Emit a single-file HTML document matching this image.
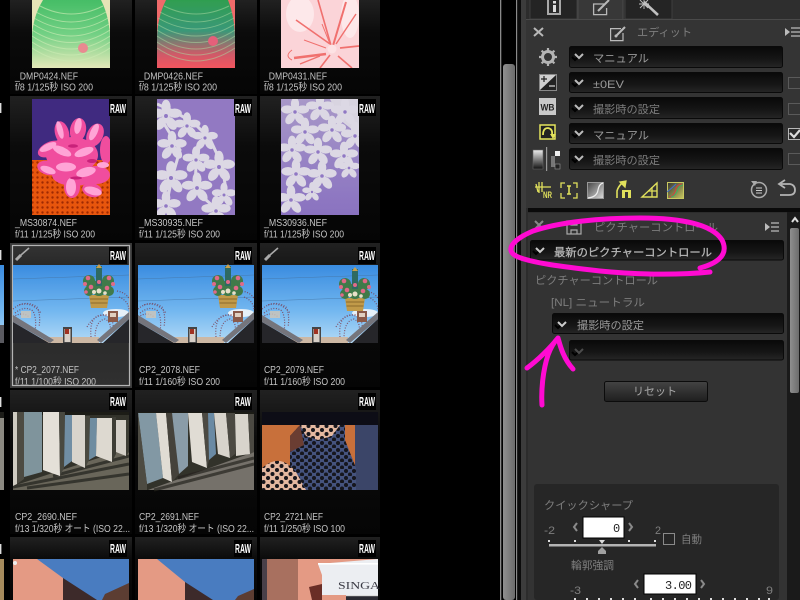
<!DOCTYPE html>
<html><head><meta charset="utf-8"><style>
html,body{margin:0;padding:0;background:#000;width:800px;height:600px;overflow:hidden}
svg{display:block}
text{font-family:"Liberation Sans","Noto Sans CJK JP",sans-serif}
.f{font-size:10px;fill:#c4c4c4}
.l{font-size:11px;fill:#9a9a9a}
.d{font-size:11px;fill:#7e7e7e}
.r{font-size:13px;font-weight:bold;fill:#fff}
.m{font-family:"Liberation Mono",monospace;font-size:12px;fill:#222}
</style></head><body>
<svg width="800" height="600" viewBox="0 0 800 600" xmlns="http://www.w3.org/2000/svg">
<defs>
<linearGradient id="cell" x1="0" y1="0" x2="0" y2="1"><stop offset="0" stop-color="#212121"/><stop offset=".35" stop-color="#0b0b0b"/><stop offset="1" stop-color="#050505"/></linearGradient>
<linearGradient id="sel" x1="0" y1="0" x2="0" y2="1"><stop offset="0" stop-color="#333"/><stop offset=".2" stop-color="#242424"/><stop offset="1" stop-color="#303030"/></linearGradient>
<linearGradient id="sky" x1="0" y1="0" x2="0" y2="1"><stop offset="0" stop-color="#3a8ce0"/><stop offset=".6" stop-color="#74b8f0"/><stop offset="1" stop-color="#b4daf6"/></linearGradient>
<linearGradient id="dd" x1="0" y1="0" x2="0" y2="1"><stop offset="0" stop-color="#090909"/><stop offset=".6" stop-color="#161616"/><stop offset="1" stop-color="#262626"/></linearGradient>
<linearGradient id="btn" x1="0" y1="0" x2="0" y2="1"><stop offset="0" stop-color="#444"/><stop offset="1" stop-color="#1e1e1e"/></linearGradient>
<linearGradient id="sb" x1="0" y1="0" x2="1" y2="0"><stop offset="0" stop-color="#8f8f8f"/><stop offset="1" stop-color="#6c6c6c"/></linearGradient>
<linearGradient id="g1" x1="0" y1="0" x2="0" y2="1"><stop offset="0" stop-color="#46bd66"/><stop offset=".5" stop-color="#72d084"/><stop offset="1" stop-color="#e4e8b8"/></linearGradient>
<linearGradient id="g2" x1="0" y1="0" x2="0" y2="1"><stop offset="0" stop-color="#2f9e50"/><stop offset=".45" stop-color="#3a9878"/><stop offset=".8" stop-color="#d05a68"/><stop offset="1" stop-color="#f2555f"/></linearGradient>
<linearGradient id="grey" x1="0" y1="0" x2="0" y2="1"><stop offset="0" stop-color="#eee"/><stop offset="1" stop-color="#111"/></linearGradient>
<linearGradient id="curve" x1="0" y1="0" x2="1" y2="1"><stop offset="0" stop-color="#333"/><stop offset="1" stop-color="#c8c860"/></linearGradient>
<linearGradient id="tone" x1="0" y1="0" x2="1" y2="1"><stop offset="0" stop-color="#444"/><stop offset="1" stop-color="#ddd"/></linearGradient>
<linearGradient id="pap" x1="0" y1="0" x2="0" y2="1"><stop offset="0" stop-color="#a898c8"/><stop offset=".55" stop-color="#9682c4"/><stop offset="1" stop-color="#8a72c0"/></linearGradient>
<pattern id="dots" width="5" height="5" patternUnits="userSpaceOnUse"><rect width="5" height="5" fill="#e8560e"/><circle cx="2.5" cy="2.5" r="1.2" fill="#a02c06"/></pattern>
<pattern id="leoL" width="9" height="8" patternUnits="userSpaceOnUse"><rect width="9" height="8" fill="#e4b8a0"/><circle cx="2.5" cy="2" r="2" fill="#17131a"/><circle cx="7" cy="6" r="2" fill="#17131a"/></pattern>
<pattern id="leoB" width="8" height="7" patternUnits="userSpaceOnUse"><rect width="8" height="7" fill="#44527e"/><circle cx="2" cy="2" r="2" fill="#12121e"/><circle cx="6" cy="5.5" r="2" fill="#12121e"/></pattern>
<filter id="soft"><feGaussianBlur stdDeviation=".35"/></filter>
<clipPath id="c1"><rect x="32" y="0" width="78" height="68"/></clipPath>
<clipPath id="c2"><rect x="157" y="0" width="78" height="68"/></clipPath>
<clipPath id="c3"><rect x="281" y="0" width="78" height="68"/></clipPath>
<clipPath id="c4"><rect x="32" y="99" width="78" height="116"/></clipPath>
<clipPath id="c5"><rect x="157" y="99" width="78" height="116"/></clipPath>
<clipPath id="c6"><rect x="281" y="99" width="78" height="116"/></clipPath>

<g id="fl"><g fill="#dcd8e4"><ellipse cx="0" cy="-7" rx="3.6" ry="5.5"/><ellipse cx="6.7" cy="-2.2" rx="5.5" ry="3.6"/><ellipse cx="4.1" cy="5.7" rx="3.6" ry="5.5" transform="rotate(-36 4.1 5.7)"/><ellipse cx="-4.1" cy="5.7" rx="3.6" ry="5.5" transform="rotate(36 -4.1 5.7)"/><ellipse cx="-6.7" cy="-2.2" rx="5.5" ry="3.6"/><circle r="3"/></g><circle r="1.5" fill="#9078c4"/></g>

<g id="scene"><rect width="116" height="78" fill="url(#sky)"/>
<path d="M0 14 L116 10 M0 36 L116 32" stroke="#4472a0" stroke-width=".4"/>
<ellipse cx="103" cy="48" rx="13" ry="4" fill="#e6f0f8"/>
<g fill="none" stroke="#7a3040" stroke-width="1.2" stroke-dasharray="1 1.6" opacity=".75">
<path d="M0 44 Q12 34 24 42 Q28 50 26 62"/><path d="M2 48 Q12 40 20 46 Q24 54 22 66"/><path d="M6 40 Q18 36 28 48"/><path d="M0 52 Q10 46 16 52"/>
<path d="M78 72 Q76 50 90 50 Q102 52 100 66"/><path d="M82 74 Q82 56 92 54 Q100 58 96 70"/><path d="M74 62 Q82 48 96 50"/>
<path d="M106 32 Q116 36 116 46"/><path d="M104 26 Q114 28 116 34"/>
</g>
<rect x="30" y="72" width="56" height="6" fill="#cdb8a4"/>
<path d="M0 57 L36 78 L0 78Z" fill="#26262c"/><path d="M0 50 L41 75 L37 78 L0 57Z" fill="#74747c"/>
<path d="M116 54 L90 78 L116 78Z" fill="#26262c"/><path d="M116 47 L84 75 L88 78 L116 54Z" fill="#74747c"/>
<rect x="8" y="46" width="10" height="7" fill="#cfc6b8" opacity=".8"/>
<rect x="50" y="62" width="9" height="16" fill="#444"/><rect x="51.5" y="64" width="6" height="13" fill="#d8d0c8"/><rect x="52" y="64" width="4" height="5" fill="#a03020"/>
<rect x="95" y="46" width="10" height="11" fill="#8a5a48"/><rect x="97" y="48" width="6" height="4" fill="#e0d0c0"/>
</g>
<g id="deco">
<path d="M76 30 L96 30 L94 43 L78 43Z" fill="#c19a48"/><path d="M77 34 L95 34 M77.5 38 L94.5 38" stroke="#7a5a22" stroke-width=".7"/>
<g fill="#3f7a4a"><circle cx="76" cy="16" r="6"/><circle cx="95" cy="16" r="6"/><circle cx="86" cy="23" r="8"/><circle cx="76" cy="26" r="5"/><circle cx="96" cy="26" r="5"/></g>
<rect x="83" y="1" width="6" height="20" fill="#2e6a62"/><path d="M83 3 L86 -1 L89 3" fill="#c8a050"/>
<g fill="#e06a88"><circle cx="75" cy="13" r="2.3"/><circle cx="96" cy="13" r="2.3"/><circle cx="78" cy="22" r="2.3"/><circle cx="94" cy="23" r="2.3"/><circle cx="86" cy="17" r="2"/><circle cx="72" cy="19" r="2"/><circle cx="100" cy="19" r="2"/><circle cx="73" cy="27" r="1.8"/></g>
<g fill="#e8e0c8"><circle cx="86" cy="26" r="2.5"/><circle cx="81" cy="27" r="2"/><circle cx="92" cy="28" r="1.8"/></g>
</g>

<g id="wall"><rect width="116" height="78" fill="#33312b"/>
<rect width="116" height="3" fill="#1c1c18"/>
<path d="M0 78 L0 74 L116 36 L116 78Z" fill="#69665a"/>
<path d="M0 75 L116 52 M14 76 L116 62 M40 64 L116 44" stroke="#26241f" stroke-width="3" opacity=".75"/>
<path d="M0 0 L4 0 L4 72 L0 74Z" fill="#d0ccc2"/>
<path d="M4 0 L11 0 L11 67 L4 72Z" fill="#4e4c42"/>
<path d="M11 0 L29 0 L29 60 L11 65Z" fill="#7f949c"/>
<path d="M30 0 L46 0 L47 64 L30 58Z" fill="#e4e0d8"/>
<path d="M46 0 L52 0 L51 56 L47 64Z" fill="#4a4840"/>
<path d="M52 3 L59 3 L59 49 L51 55Z" fill="#6f8ea4"/>
<path d="M59 3 L72 3 L72 56 L59 50Z" fill="#d8d4cc"/>
<path d="M72 4 L77 4 L76 48 L72 56Z" fill="#4a4840"/>
<path d="M77 6 L84 6 L83 44 L76 48Z" fill="#6e8ca0"/>
<path d="M84 6 L99 6 L99 50 L83 44Z" fill="#ddd9d0"/>
<path d="M99 5 L103 5 L103 42 L99 50Z" fill="#3e3c34"/>
<path d="M103 8 L113 8 L113 44 L103 40Z" fill="#d4d0c8"/>
<path d="M113 8 L116 8 L116 40 L113 44Z" fill="#3e3c34"/>
</g>
<g id="wall2"><rect width="116" height="78" fill="#33312b"/>
<rect width="116" height="3" fill="#1c1c18"/>
<path d="M10 78 L116 40 L116 78Z" fill="#75716a"/>
<path d="M16 78 L116 52 M40 66 L116 46" stroke="#26241f" stroke-width="3" opacity=".7"/>
<path d="M0 1 L18 1 L25 66 L9 72Z" fill="#8298a4"/>
<path d="M0 0 L0 78 L9 78 L9 72Z" fill="#4e4c42"/>
<path d="M18 1 L28 1 L34 70 L25 66Z" fill="#e0dcd4"/>
<path d="M28 1 L34 1 L41 62 L34 70Z" fill="#45433b"/>
<path d="M34 1 L50 1 L50 54 L41 62Z" fill="#8a9ca8"/>
<path d="M50 1 L64 1 L69 56 L54 50Z" fill="#e0dcd4"/>
<path d="M64 1 L70 1 L71 48 L69 56Z" fill="#4c4a42"/>
<path d="M70 1 L76 1 L78 42 L71 48Z" fill="#6a8aa4"/>
<path d="M76 1 L88 1 L92 46 L80 42Z" fill="#d8d4cc"/>
<path d="M88 1 L97 1 L97 42 L92 46Z" fill="#4c4a42"/>
<path d="M97 2 L110 2 L112 42 L98 44Z" fill="#d8d4cc"/>
<path d="M110 2 L116 2 L116 40 L112 42Z" fill="#4c4a42"/>
</g>
<g id="pink1"><rect width="116" height="41" fill="#4a7cc0"/><path d="M0 0 L24 0 L50 19 L50 41 L0 41Z" fill="#e49a84"/><path d="M50 19 L84 41 L50 41Z" fill="#3c2a2c"/><path d="M89 41 L92 35 L116 24 L116 41Z" fill="#5c3c32"/><circle cx="2" cy="4" r="2" fill="#eee"/></g>
<g id="pink2"><rect width="116" height="41" fill="#4a7cc0"/><path d="M0 0 L19 0 L47 23 L47 41 L0 41Z" fill="#e49a84"/><path d="M47 23 L75 41 L47 41Z" fill="#3c2a2c"/><path d="M97 41 L100 37 L116 30 L116 41Z" fill="#5c3c32"/></g>
</defs>

<rect width="800" height="600" fill="#000"/>

<!-- left sliver -->
<g>
<rect x="0" y="265" width="4" height="78" fill="url(#sky)"/><rect x="0" y="325" width="4" height="18" fill="#5a5a60"/>
<rect x="0" y="412" width="4" height="78" fill="#8a8880"/><rect x="0" y="412" width="4" height="6" fill="#1c1c18"/>
<rect x="0" y="559" width="4" height="41" fill="#a48a5c"/>
<rect x="0" y="103" width="1.4" height="10" fill="#ddd"/><rect x="0" y="250" width="1.4" height="10" fill="#ddd"/><rect x="0" y="397" width="1.4" height="10" fill="#ddd"/><rect x="0" y="544" width="1.4" height="10" fill="#ddd"/>
</g>

<!-- cells -->
<g fill="url(#cell)">
<rect x="10" y="0" width="122" height="94"/><rect x="135" y="0" width="122" height="94"/><rect x="260" y="0" width="120" height="94"/>
<rect x="10" y="96" width="122" height="144"/><rect x="135" y="96" width="122" height="144"/><rect x="260" y="96" width="120" height="144"/>
<rect x="135" y="243" width="122" height="144"/><rect x="260" y="243" width="120" height="144"/>
<rect x="10" y="390" width="122" height="144"/><rect x="135" y="390" width="122" height="144"/><rect x="260" y="390" width="120" height="144"/>
<rect x="10" y="537" width="122" height="63"/><rect x="135" y="537" width="122" height="63"/><rect x="260" y="537" width="120" height="63"/>
</g>
<rect x="10" y="243" width="122" height="145" fill="#3a3a3a"/>
<rect x="12.5" y="245.5" width="117" height="140" fill="url(#sel)" stroke="#b4b4b4" stroke-width="1.2"/>

<g filter="url(#soft)">
<!-- row 1 -->
<g clip-path="url(#c1)"><rect x="32" y="0" width="78" height="68" fill="#e6e4b6"/>
<path d="M43 0 Q32 18 32 40 V68 H110 V40 Q110 18 101 0Z" fill="url(#g1)"/>
<g fill="none" stroke="#ccecb4" stroke-width="1" opacity=".65"><path d="M40 6 Q71 22 103 6"/><path d="M36 12 Q71 32 106 12"/><path d="M34 18 Q71 40 108 18"/><path d="M33 24 Q71 48 109 24"/><path d="M32 30 Q71 55 110 30"/><path d="M32 36 Q71 62 110 36"/><path d="M32 42 Q71 68 110 42"/><path d="M32 48 Q71 74 110 48"/></g>
<circle cx="83" cy="48" r="5" fill="#e88a90"/></g>

<g clip-path="url(#c2)"><rect x="157" y="0" width="78" height="68" fill="#f06a6a"/>
<path d="M166 0 Q157 18 157 40 V68 H235 V40 Q235 18 228 0Z" fill="url(#g2)"/>
<g fill="none" stroke="#a8d8a0" stroke-width="1" opacity=".55"><path d="M164 6 Q196 22 229 6"/><path d="M160 12 Q196 32 232 12"/><path d="M158 18 Q196 40 234 18"/><path d="M157 24 Q196 48 235 24"/><path d="M157 30 Q196 55 235 30"/><path d="M157 36 Q196 62 235 36"/><path d="M157 42 Q196 68 235 42"/><path d="M157 48 Q196 74 235 48"/></g>
<circle cx="213" cy="41" r="5" fill="#e4607a"/></g>

<g clip-path="url(#c3)"><rect x="281" y="0" width="78" height="68" fill="#fbd4d8"/>
<g fill="#fde8ea"><ellipse cx="300" cy="14" rx="14" ry="18"/><ellipse cx="350" cy="16" rx="9" ry="22"/></g>
<g stroke="#f0706e" fill="none"><path d="M332 49 L318 0" stroke-width="1.6"/><path d="M332 49 L346 2" stroke-width="2"/><path d="M336 44 L356 14" stroke-width="1.4"/><path d="M330 44 L296 20" stroke-width="1.6"/><path d="M326 48 L304 40"/><path d="M340 48 L359 46" stroke-width="1.8"/><path d="M326 54 L294 58" stroke-width="2.4"/><path d="M292 50 Q284 56 292 60"/><path d="M330 55 L320 68" stroke-width="1.6"/><path d="M338 56 L352 68" stroke-width="1.6"/><path d="M322 24 L330 44"/><path d="M300 64 L320 56" stroke-width="1.4"/></g>
<circle cx="332" cy="49" r="4.5" fill="#fde2e4"/></g>

<!-- row 2 -->
<g clip-path="url(#c4)">
<rect x="32" y="99" width="78" height="116" fill="#3f2a80"/>
<rect x="32" y="160" width="78" height="55" fill="url(#dots)"/>
<g fill="#f04e9e">
<ellipse cx="62" cy="133" rx="7" ry="12" transform="rotate(-15 62 133)"/><ellipse cx="78" cy="130" rx="8" ry="12" transform="rotate(10 78 130)"/><ellipse cx="95" cy="135" rx="8" ry="12" transform="rotate(25 95 135)"/><ellipse cx="106" cy="150" rx="6" ry="14"/>
<ellipse cx="50" cy="149" rx="13" ry="7" transform="rotate(-25 50 149)"/><ellipse cx="48" cy="168" rx="11" ry="7" transform="rotate(15 48 168)"/>
<ellipse cx="72" cy="155" rx="26" ry="18"/><ellipse cx="74" cy="175" rx="22" ry="11"/><ellipse cx="96" cy="175" rx="14" ry="9"/>
<ellipse cx="72" cy="187" rx="8" ry="11"/><ellipse cx="92" cy="190" rx="10" ry="7" transform="rotate(15 92 190)"/>
</g>
<g fill="#ffa4d6">
<ellipse cx="60" cy="130" rx="3" ry="9" transform="rotate(-15 60 130)"/><ellipse cx="78" cy="126" rx="3.5" ry="8" transform="rotate(10 78 126)"/><ellipse cx="94" cy="132" rx="3.5" ry="9" transform="rotate(25 94 132)"/>
<ellipse cx="48" cy="147" rx="9" ry="3.5" transform="rotate(-25 48 147)"/><ellipse cx="62" cy="151" rx="10" ry="4" transform="rotate(25 62 151)"/><ellipse cx="84" cy="152" rx="10" ry="4" transform="rotate(-20 84 152)"/>
<ellipse cx="48" cy="170" rx="8" ry="3.5" transform="rotate(20 48 170)"/><ellipse cx="66" cy="167" rx="10" ry="4.5"/><ellipse cx="86" cy="172" rx="10" ry="4.5" transform="rotate(-15 86 172)"/>
<ellipse cx="71" cy="187" rx="5" ry="9"/><ellipse cx="93" cy="191" rx="9" ry="4" transform="rotate(15 93 191)"/><ellipse cx="103" cy="165" rx="6" ry="3"/>
</g>
<g fill="#c8207a"><ellipse cx="73" cy="146" rx="5" ry="1.8"/><ellipse cx="92" cy="161" rx="5" ry="2"/><ellipse cx="76" cy="178" rx="6" ry="1.5"/></g>
</g>

<g clip-path="url(#c5)"><rect x="157" y="99" width="78" height="116" fill="#9279c2"/>
<g fill="none" stroke="#dcd8e4" stroke-width="3"><path d="M157 104 L175 112 L195 124 L210 139 L222 165 L226 190"/><path d="M163 122 L180 150 L172 178 L166 206"/><path d="M200 142 L196 165 L195 190 L215 208"/></g>
<g transform="translate(166 116) scale(1.3)"><use href="#fl"/></g><g transform="translate(187 126) scale(1.1)"><use href="#fl"/></g><g transform="translate(205 138) scale(1.05)"><use href="#fl"/></g><g transform="translate(219 167) scale(1.3)"><use href="#fl"/></g><g transform="translate(172 146) scale(1.2)"><use href="#fl"/></g><g transform="translate(196 160) scale(1.1)"><use href="#fl"/></g><g transform="translate(171 178) scale(1.35)"><use href="#fl"/></g><g transform="translate(197 188) scale(1.25)"><use href="#fl"/></g><g transform="translate(224 195) scale(1)"><use href="#fl"/></g><g transform="translate(166 206) scale(1.2)"><use href="#fl"/></g><g transform="translate(216 211) scale(1.2)"><use href="#fl"/></g></g>

<g clip-path="url(#c6)"><rect x="281" y="99" width="78" height="116" fill="url(#pap)"/>
<path d="M330 99 H359 V135 L340 120Z" fill="#d8d4e0"/>
<g transform="translate(295 112) scale(1.15)"><use href="#fl"/></g><g transform="translate(320 108) scale(1.15)"><use href="#fl"/></g><g transform="translate(345 112) scale(1.15)"><use href="#fl"/></g><g transform="translate(305 132) scale(1.15)"><use href="#fl"/></g><g transform="translate(332 130) scale(1.15)"><use href="#fl"/></g><g transform="translate(355 136) scale(1.15)"><use href="#fl"/></g><g transform="translate(292 150) scale(1.15)"><use href="#fl"/></g><g transform="translate(318 152) scale(1.15)"><use href="#fl"/></g><g transform="translate(344 156) scale(1.15)"><use href="#fl"/></g><g transform="translate(296 174) scale(1.2)"><use href="#fl"/></g><g transform="translate(322 176) scale(1.2)"><use href="#fl"/></g><g transform="translate(349 168) scale(.9)"><use href="#fl"/></g><g transform="translate(291 200) scale(1.2)"><use href="#fl"/></g><g transform="translate(312 192) scale(.8)"><use href="#fl"/></g></g>

<!-- row 3 -->
<use href="#scene" x="13" y="265"/><use href="#deco" x="13" y="265"/>
<use href="#scene" x="138" y="265"/><use href="#deco" x="142" y="265"/>
<use href="#scene" x="262" y="265"/><use href="#deco" x="269" y="268"/>

<!-- row 4 -->
<use href="#wall" x="13" y="412"/>
<use href="#wall2" x="138" y="412"/>
<g><rect x="262" y="412" width="116" height="78" fill="#101014"/><rect x="262" y="425" width="116" height="65" fill="#c8703a"/>
<rect x="355" y="425" width="23" height="65" fill="#3a4468"/>
<path d="M290 436 L300 425 L345 425 L345 440 L356 468 L356 490 L262 490 L262 470 L290 470Z" fill="url(#leoB)"/>
<path d="M300 425 L340 425 L332 436 L318 440 L306 436Z" fill="url(#leoL)"/>
<path d="M262 468 Q280 452 296 472 L306 490 L262 490Z" fill="url(#leoL)"/>
<path d="M290 436 L300 425 L304 445 L290 452Z" fill="#6a3c30"/>
</g>

<!-- row 5 -->
<use href="#pink1" x="13" y="559"/>
<use href="#pink2" x="138" y="559"/>
<g><rect x="262" y="559" width="116" height="41" fill="#e49a84"/><rect x="262" y="559" width="5" height="41" fill="#4a4048"/><rect x="267" y="559" width="31" height="41" fill="#a8705f"/>
<path d="M318 564 L378 559 V595 H322 V575Z" fill="#eceef2"/>
<rect x="318" y="563" width="60" height="1.6" fill="#fff"/>
<text x="338" y="589" font-size="11" fill="#3a3a44" style="font-family:'Liberation Serif',serif" textLength="42" lengthAdjust="spacingAndGlyphs">SINGA</text>
<rect x="346" y="595" width="32" height="5" fill="#2a2a30"/><rect x="346" y="595" width="32" height="1.2" fill="#ddd"/>
<path d="M309 587 L322 584 L322 600 L312 600Z" fill="#6a2e28"/></g>
</g>

<!-- RAW labels -->
<g fill="#000">
<rect x="109" y="99" width="18" height="17"/><rect x="234" y="99" width="18" height="17"/><rect x="358" y="99" width="18" height="17"/>
<rect x="109" y="247" width="18" height="17"/><rect x="234" y="247" width="18" height="17"/><rect x="358" y="247" width="18" height="17"/>
<rect x="109" y="393" width="18" height="17"/><rect x="234" y="393" width="18" height="17"/><rect x="358" y="393" width="18" height="17"/>
<rect x="109" y="540" width="18" height="17"/><rect x="234" y="540" width="18" height="17"/><rect x="358" y="540" width="18" height="17"/>
</g>
<text class="r" x="110" y="113" textLength="16" lengthAdjust="spacingAndGlyphs">RAW</text><text class="r" x="235" y="113" textLength="16" lengthAdjust="spacingAndGlyphs">RAW</text><text class="r" x="359" y="113" textLength="16" lengthAdjust="spacingAndGlyphs">RAW</text>
<text class="r" x="110" y="260" textLength="16" lengthAdjust="spacingAndGlyphs">RAW</text><text class="r" x="235" y="260" textLength="16" lengthAdjust="spacingAndGlyphs">RAW</text><text class="r" x="359" y="260" textLength="16" lengthAdjust="spacingAndGlyphs">RAW</text>
<text class="r" x="110" y="406" textLength="16" lengthAdjust="spacingAndGlyphs">RAW</text><text class="r" x="235" y="406" textLength="16" lengthAdjust="spacingAndGlyphs">RAW</text><text class="r" x="359" y="406" textLength="16" lengthAdjust="spacingAndGlyphs">RAW</text>
<text class="r" x="110" y="553" textLength="16" lengthAdjust="spacingAndGlyphs">RAW</text><text class="r" x="235" y="553" textLength="16" lengthAdjust="spacingAndGlyphs">RAW</text><text class="r" x="359" y="553" textLength="16" lengthAdjust="spacingAndGlyphs">RAW</text>

<!-- pencil marks -->
<g stroke="#aaa" fill="none"><path d="M16 260 L21 255" stroke-width="3"/><path d="M21 255 L29 248" stroke-width="1.6"/><path d="M265 260 L270 255" stroke-width="3"/><path d="M270 255 L278 248" stroke-width="1.6"/></g>

<!-- thumb text -->
<text class="f" x="15" y="79.5" textLength="63" lengthAdjust="spacingAndGlyphs">_DMP0424.NEF</text><text class="f" x="15" y="90.5" textLength="78" lengthAdjust="spacingAndGlyphs">f/8 1/125秒 ISO 200</text>
<text class="f" x="139" y="79.5" textLength="64" lengthAdjust="spacingAndGlyphs">_DMP0426.NEF</text><text class="f" x="139" y="90.5" textLength="78" lengthAdjust="spacingAndGlyphs">f/8 1/125秒 ISO 200</text>
<text class="f" x="264" y="79.5" textLength="63" lengthAdjust="spacingAndGlyphs">_DMP0431.NEF</text><text class="f" x="264" y="90.5" textLength="78" lengthAdjust="spacingAndGlyphs">f/8 1/125秒 ISO 200</text>
<text class="f" x="15" y="226" textLength="62" lengthAdjust="spacingAndGlyphs">_MS30874.NEF</text><text class="f" x="15" y="237.5" textLength="80" lengthAdjust="spacingAndGlyphs">f/11 1/125秒 ISO 200</text>
<text class="f" x="139" y="226" textLength="64" lengthAdjust="spacingAndGlyphs">_MS30935.NEF</text><text class="f" x="139" y="237.5" textLength="81" lengthAdjust="spacingAndGlyphs">f/11 1/125秒 ISO 200</text>
<text class="f" x="264" y="226" textLength="63" lengthAdjust="spacingAndGlyphs">_MS30936.NEF</text><text class="f" x="264" y="237.5" textLength="80" lengthAdjust="spacingAndGlyphs">f/11 1/125秒 ISO 200</text>
<text class="f" x="15" y="373" textLength="64" lengthAdjust="spacingAndGlyphs">* CP2_2077.NEF</text>
<svg x="0" y="0" width="800" height="384.5" viewBox="0 0 800 384.5"><text class="f" x="15" y="385" textLength="81" lengthAdjust="spacingAndGlyphs">f/11 1/100秒 ISO 200</text></svg>
<text class="f" x="139" y="373" textLength="61" lengthAdjust="spacingAndGlyphs">CP2_2078.NEF</text><text class="f" x="139" y="385" textLength="81" lengthAdjust="spacingAndGlyphs">f/11 1/160秒 ISO 200</text>
<text class="f" x="264" y="373" textLength="60" lengthAdjust="spacingAndGlyphs">CP2_2079.NEF</text><text class="f" x="264" y="385" textLength="81" lengthAdjust="spacingAndGlyphs">f/11 1/160秒 ISO 200</text>
<text class="f" x="15" y="520" textLength="62" lengthAdjust="spacingAndGlyphs">CP2_2690.NEF</text><text class="f" x="15" y="532" textLength="115" lengthAdjust="spacingAndGlyphs">f/13 1/320秒 オート (ISO 22...</text>
<text class="f" x="139" y="520" textLength="60" lengthAdjust="spacingAndGlyphs">CP2_2691.NEF</text><text class="f" x="139" y="532" textLength="115" lengthAdjust="spacingAndGlyphs">f/13 1/320秒 オート (ISO 22...</text>
<text class="f" x="264" y="520" textLength="59" lengthAdjust="spacingAndGlyphs">CP2_2721.NEF</text><text class="f" x="264" y="532" textLength="81" lengthAdjust="spacingAndGlyphs">f/11 1/250秒 ISO 100</text>

<!-- middle scrollbar -->
<rect x="500" y="0" width="1.3" height="600" fill="#8a8a8a"/>
<rect x="516" y="0" width="1.3" height="600" fill="#8a8a8a"/>
<rect x="503" y="64" width="12" height="536" rx="3" fill="url(#sb)"/>
<rect x="517.3" y="0" width="3.7" height="600" fill="#0c0c0c"/>

<!-- right column background -->
<rect x="521" y="0" width="279" height="600" fill="#2c2c2c"/>
<rect x="521" y="0" width="5" height="600" fill="#3c3c3c"/>
<!-- tabs -->
<rect x="530" y="-1" width="47" height="20" fill="#242424" stroke="#3e3e3e"/>
<rect x="578" y="-1" width="45" height="21" fill="#383838" stroke="#4a4a4a"/>
<rect x="625" y="-1" width="47" height="20" fill="#242424" stroke="#3e3e3e"/>
<rect x="672.5" y="0" width="127.5" height="19" fill="#2e2e2e"/>
<rect x="547" y="0" width="14" height="15" fill="#a8a8a8"/><rect x="549" y="0" width="10" height="13" fill="#2a2a2a"/><rect x="553" y="5" width="3" height="7" fill="#ddd"/><rect x="553" y="1" width="3" height="2.5" fill="#ddd"/>
<g fill="none" stroke="#b8b8b8" stroke-width="1.3"><path d="M604 4 H593.6 V14.6 H606.6 V8"/><path d="M598 11 L609 0" stroke-width="2"/></g>
<g stroke="#c0c0c0" fill="none"><path d="M644 2 L658 15" stroke-width="2.6"/><path d="M639 4 L649 4 M644 0 L644 9 M640 0 L648 8 M648 0 L640 8" stroke-width=".9"/></g>

<!-- edit panel -->
<rect x="526" y="19" width="274" height="189" fill="#343434"/>
<rect x="526" y="19" width="274" height="1" fill="#4a4a4a"/>
<path d="M534 28 L543 36 M543 28 L534 36" stroke="#b8b8b8" stroke-width="2"/>
<g fill="none" stroke="#bbb" stroke-width="1.2"><path d="M621 28.6 H610.6 V40.6 H623 V33"/><path d="M616 36 L625 27" stroke-width="2"/></g>
<circle cx="616" cy="36" r="1.5" fill="#bbb"/>
<text class="d" x="637" y="36" textLength="55" lengthAdjust="spacingAndGlyphs">エディット</text>
<path d="M785 28 L790 32 L785 36Z" fill="#bbb"/><path d="M791 28 H800 M791 32 H800 M791 36 H800" stroke="#bbb" stroke-width="1.2"/>

<!-- edit dropdowns -->
<g fill="url(#dd)" stroke="#0a0a0a">
<rect x="569.5" y="46.5" width="213" height="21" rx="2"/>
<rect x="569.5" y="72.5" width="213" height="20" rx="2"/>
<rect x="569.5" y="97.5" width="213" height="21" rx="2"/>
<rect x="569.5" y="123.5" width="213" height="20" rx="2"/>
<rect x="569.5" y="148.5" width="213" height="21" rx="2"/>
</g>
<g fill="none" stroke-width="2">
<g stroke="#000"><path d="M572 57 L575 60 L578 57"/><path d="M572 83 L575 86 L578 83"/><path d="M572 108 L575 111 L578 108"/><path d="M572 134 L575 137 L578 134"/><path d="M572 159 L575 162 L578 159"/></g>
<g stroke="#bbb"><path d="M575 54 L579 58 L583 54"/><path d="M575 80 L579 84 L583 80"/><path d="M575 105 L579 109 L583 105"/><path d="M575 131 L579 135 L583 131"/><path d="M575 156 L579 160 L583 156"/></g>
</g>
<text class="l" x="593" y="62" textLength="56" lengthAdjust="spacingAndGlyphs">マニュアル</text>
<text class="l" x="593" y="88" textLength="31" lengthAdjust="spacingAndGlyphs">±0EV</text>
<text class="d" x="593" y="113" textLength="67" lengthAdjust="spacingAndGlyphs">撮影時の設定</text>
<text class="l" x="593" y="139" textLength="56" lengthAdjust="spacingAndGlyphs">マニュアル</text>
<text class="d" x="593" y="164" textLength="67" lengthAdjust="spacingAndGlyphs">撮影時の設定</text>
<!-- checkboxes -->
<g fill="none" stroke="#5a5a5a" stroke-width="1"><rect x="788.5" y="77.5" width="12" height="11"/><rect x="788.5" y="103.5" width="12" height="11"/><rect x="788.5" y="153.5" width="12" height="11"/></g>
<rect x="788.5" y="128.5" width="12" height="11" fill="#2c2c2c" stroke="#b8b8b8"/><path d="M790 133 L794 137 L800 130" fill="none" stroke="#ddd" stroke-width="2.2"/>

<!-- left icons -->
<circle cx="548" cy="57" r="5.5" fill="none" stroke="#b4b4b4" stroke-width="3"/>
<g stroke="#b4b4b4" stroke-width="2.2"><path d="M548 48 V51 M548 63 V66 M539 57 H542 M554 57 H557 M541.6 50.6 L544 53 M552 61 L554.4 63.4 M554.4 50.6 L552 53 M544 61 L541.6 63.4"/></g>
<rect x="539.5" y="74.5" width="17" height="16" fill="#d0d0d0" stroke="#888"/><path d="M540 90 L556 75 V90Z" fill="#222"/><path d="M541 79 H547 M544 76 V82" stroke="#222" stroke-width="1.2"/><path d="M549 86 H555" stroke="#ddd" stroke-width="1.2"/>
<rect x="539" y="98" width="17" height="17" fill="#c8c8c8"/><text x="540.5" y="110.5" font-size="9" font-weight="bold" fill="#222" textLength="14" lengthAdjust="spacingAndGlyphs">WB</text>
<rect x="540" y="125" width="15" height="14" fill="#222" stroke="#e4e45c" stroke-width="1.5"/><path d="M543 135 Q543 128 548 128 Q553 129 552 135" fill="none" stroke="#e4e45c" stroke-width="1.8"/><path d="M550 134 L556 134 L553 139Z" fill="#e4e45c"/>
<rect x="533" y="150" width="10" height="19" fill="url(#grey)" stroke="#666" stroke-width=".6"/>
<rect x="546" y="147" width="1.2" height="24" fill="#999"/>
<rect x="551" y="156" width="4" height="11" fill="#777"/><rect x="555" y="151" width="5" height="5" fill="#eee"/><rect x="555" y="164" width="5" height="5" fill="#222" stroke="#999" stroke-width=".6"/>

<!-- tool row -->
<g stroke="#e0e05c" fill="none" stroke-width="1.3">
<path d="M535 187 H551 M539 182 V193 M542 182 V192 M536 184 L538 192"/>
<path d="M561 188 V183 H565 M573 183 H577 V188 M561 193 V198 H565 M573 198 H577 V193"/>
<path d="M567 186 H571 M569 186 V194 M567 194 H571" stroke-width="1.6"/>
<path d="M617 198 V191 Q618 187 622 183" stroke-width="1.6"/><path d="M620 182 L626 181 L625 187Z" fill="#e0e05c"/>
<path d="M642 197 L657 183 V197Z" stroke-width="1.4"/><path d="M648 191 L657 191 M652 187 V197"/>
</g>
<text x="543" y="198" font-size="9" font-weight="bold" fill="#e0e05c" textLength="9" lengthAdjust="spacingAndGlyphs">NR</text>
<rect x="587.5" y="182.5" width="16" height="16" fill="url(#tone)" stroke="#999"/><path d="M588 198 Q597 197 598 190 Q599 184 603 183" fill="none" stroke="#eee" stroke-width="1.2"/>
<rect x="622" y="190" width="9" height="8" fill="#e0e05c"/><rect x="625" y="192" width="3" height="6" fill="#333"/>
<rect x="667.5" y="182.5" width="16" height="16" fill="url(#curve)" stroke="#c8c860"/><path d="M669 197 Q674 197 676 188 Q678 184 682 184" fill="none" stroke="#d04040" stroke-width="1"/><path d="M671 197 Q676 196 678 189 Q680 185 683 185" fill="none" stroke="#40b060" stroke-width="1"/><path d="M667 192 Q672 188 676 184" fill="none" stroke="#4070d0" stroke-width="1"/>
<circle cx="759" cy="190" r="7.5" fill="none" stroke="#aaa" stroke-width="1.5"/><path d="M756 188 H762 M756 190.5 H762 M756 193 H762" stroke="#ccc" stroke-width="1.1"/><path d="M751 181 L757 181 L755 186Z" fill="#aaa"/>
<path d="M781 184 H790 Q795 185 795 190 Q795 195 789 195 H780" fill="none" stroke="#b4b4b4" stroke-width="1.8"/><path d="M785 180 L779 184 L785 188" fill="none" stroke="#b4b4b4" stroke-width="1.8"/>

<!-- gap -->
<rect x="528" y="208" width="272" height="4" fill="#0a0a0a"/>
<rect x="526" y="208" width="2" height="392" fill="#2c2c2c"/>

<!-- panel 2 -->
<rect x="528" y="213" width="259" height="387" fill="#333"/>
<rect x="787" y="212" width="13" height="388" fill="#1a1a1a"/>
<rect x="790" y="228" width="9" height="165" rx="2" fill="url(#sb)"/>
<path d="M792 222 L795 218 L798 222" fill="none" stroke="#ddd" stroke-width="2"/>
<path d="M535 221 L543 229 M543 221 L535 229" stroke="#888" stroke-width="2"/>
<g fill="none" stroke="#aaa" stroke-width="1.2"><rect x="567" y="221" width="14" height="13"/><path d="M571 221 V225 H577 V221 M571 234 V230 H577 V234"/></g>
<text class="d" x="594" y="231" textLength="124" lengthAdjust="spacingAndGlyphs">ピクチャーコントロール</text>
<path d="M765 223 L770 227 L765 231Z" fill="#bbb"/><path d="M771 223 H779 M771 227 H779 M771 231 H779" stroke="#bbb" stroke-width="1.2"/>

<g fill="url(#dd)" stroke="#0a0a0a">
<rect x="530.5" y="240.5" width="253" height="19.5" rx="2"/>
<rect x="552.5" y="313.5" width="231" height="20" rx="2"/>
<rect x="569.5" y="340.5" width="214" height="19.5" rx="2"/>
</g>
<g fill="none" stroke-width="2">
<g stroke="#000"><path d="M533 251 L536 254 L539 251"/><path d="M555 325 L558 328 L561 325"/><path d="M572 352 L575 355 L578 352"/></g>
<path d="M536 248 L540 252 L544 248" stroke="#ccc"/><path d="M558 322 L562 326 L566 322" stroke="#ccc"/><path d="M575 349 L579 353 L583 349" stroke="#4c4c4c"/>
</g>
<text x="554" y="256" font-size="11" fill="#b8b8b8" stroke="#b8b8b8" stroke-width=".25" textLength="158" lengthAdjust="spacingAndGlyphs">最新のピクチャーコントロール</text>
<text class="d" x="535" y="284" textLength="123" lengthAdjust="spacingAndGlyphs">ピクチャーコントロール</text>
<text class="d" x="551" y="306" textLength="94" lengthAdjust="spacingAndGlyphs">[NL] ニュートラル</text>
<text class="l" x="577" y="329" textLength="67" lengthAdjust="spacingAndGlyphs">撮影時の設定</text>
<rect x="604.5" y="381.5" width="103" height="20" rx="2" fill="url(#btn)" stroke="#0c0c0c"/>
<text x="633" y="395" font-size="11" fill="#a8a8a8" textLength="44" lengthAdjust="spacingAndGlyphs">リセット</text>

<!-- quick sharpen -->
<rect x="534" y="484" width="245" height="116" rx="3" fill="#262626"/>
<text class="d" x="544" y="509" textLength="89" lengthAdjust="spacingAndGlyphs">クイックシャープ</text>
<text class="d" x="544" y="534" textLength="11" lengthAdjust="spacingAndGlyphs">-2</text>
<text class="d" x="655" y="534" textLength="6" lengthAdjust="spacingAndGlyphs">2</text>
<path d="M577 523 L574 527 L577 531 M629 523 L632 527 L629 531" fill="none" stroke="#8a8a8a" stroke-width="2"/>
<rect x="583" y="517" width="41" height="21" fill="#fff" stroke="#000"/>
<text class="m" x="613" y="532">0</text>
<g fill="#ddd"><rect x="548" y="540" width="2" height="2"/><rect x="574" y="540" width="2" height="2"/><rect x="628" y="540" width="2" height="2"/><rect x="654" y="540" width="2" height="2"/></g>
<path d="M599 540 H605 L602 544Z" fill="#ddd"/>
<rect x="549" y="544" width="107" height="2.5" fill="#b4b4b4"/>
<path d="M602 547 L606 551 V554 H598 V551Z" fill="#a0a0a0"/>
<rect x="663.5" y="533.5" width="11" height="11" fill="none" stroke="#8a8a8a"/>
<text class="d" x="681" y="543" textLength="21" lengthAdjust="spacingAndGlyphs">自動</text>
<text class="d" x="571" y="569" textLength="43" lengthAdjust="spacingAndGlyphs">輪郭強調</text>
<text class="d" x="570" y="594" textLength="11" lengthAdjust="spacingAndGlyphs">-3</text>
<path d="M638 580 L635 584 L638 588 M701 580 L704 584 L701 588" fill="none" stroke="#8a8a8a" stroke-width="2"/>
<rect x="644" y="574" width="52" height="20" fill="#fff" stroke="#000"/>
<text class="m" x="665" y="589" textLength="27">3.00</text>
<text class="d" x="766" y="594" textLength="7" lengthAdjust="spacingAndGlyphs">9</text>
<g fill="#ddd"><rect x="574" y="598" width="2" height="2"/><rect x="586" y="598" width="2" height="2"/><rect x="598" y="598" width="2" height="2"/><rect x="610" y="598" width="2" height="2"/><rect x="622" y="598" width="2" height="2"/><rect x="634" y="598" width="2" height="2"/><rect x="650" y="598" width="2" height="2"/><rect x="662" y="598" width="2" height="2"/><rect x="674" y="598" width="2" height="2"/><rect x="686" y="598" width="2" height="2"/><rect x="698" y="598" width="2" height="2"/><rect x="710" y="598" width="2" height="2"/><rect x="722" y="598" width="2" height="2"/><rect x="734" y="598" width="2" height="2"/><rect x="746" y="598" width="2" height="2"/><rect x="758" y="598" width="2" height="2"/><rect x="768" y="598" width="2" height="2"/></g>

<!-- magenta annotation -->
<g fill="none" stroke="#ff0ad2" stroke-width="5" stroke-linecap="round" stroke-linejoin="round">
<path d="M710 272 C680 275 640 275 600 271 C565 267 530 263 516 256 C505 250 512 240 533 231 C560 222 600 218 640 218 C680 218 712 224 722 240 C728 252 722 262 700 268"/>
<path d="M542 405 C541 390 543 370 548 355 C551 347 554 342 558 338 M527 368 C538 360 550 348 558 338 C560 345 563 358 573 369"/>
</g>
</svg>
</body></html>
